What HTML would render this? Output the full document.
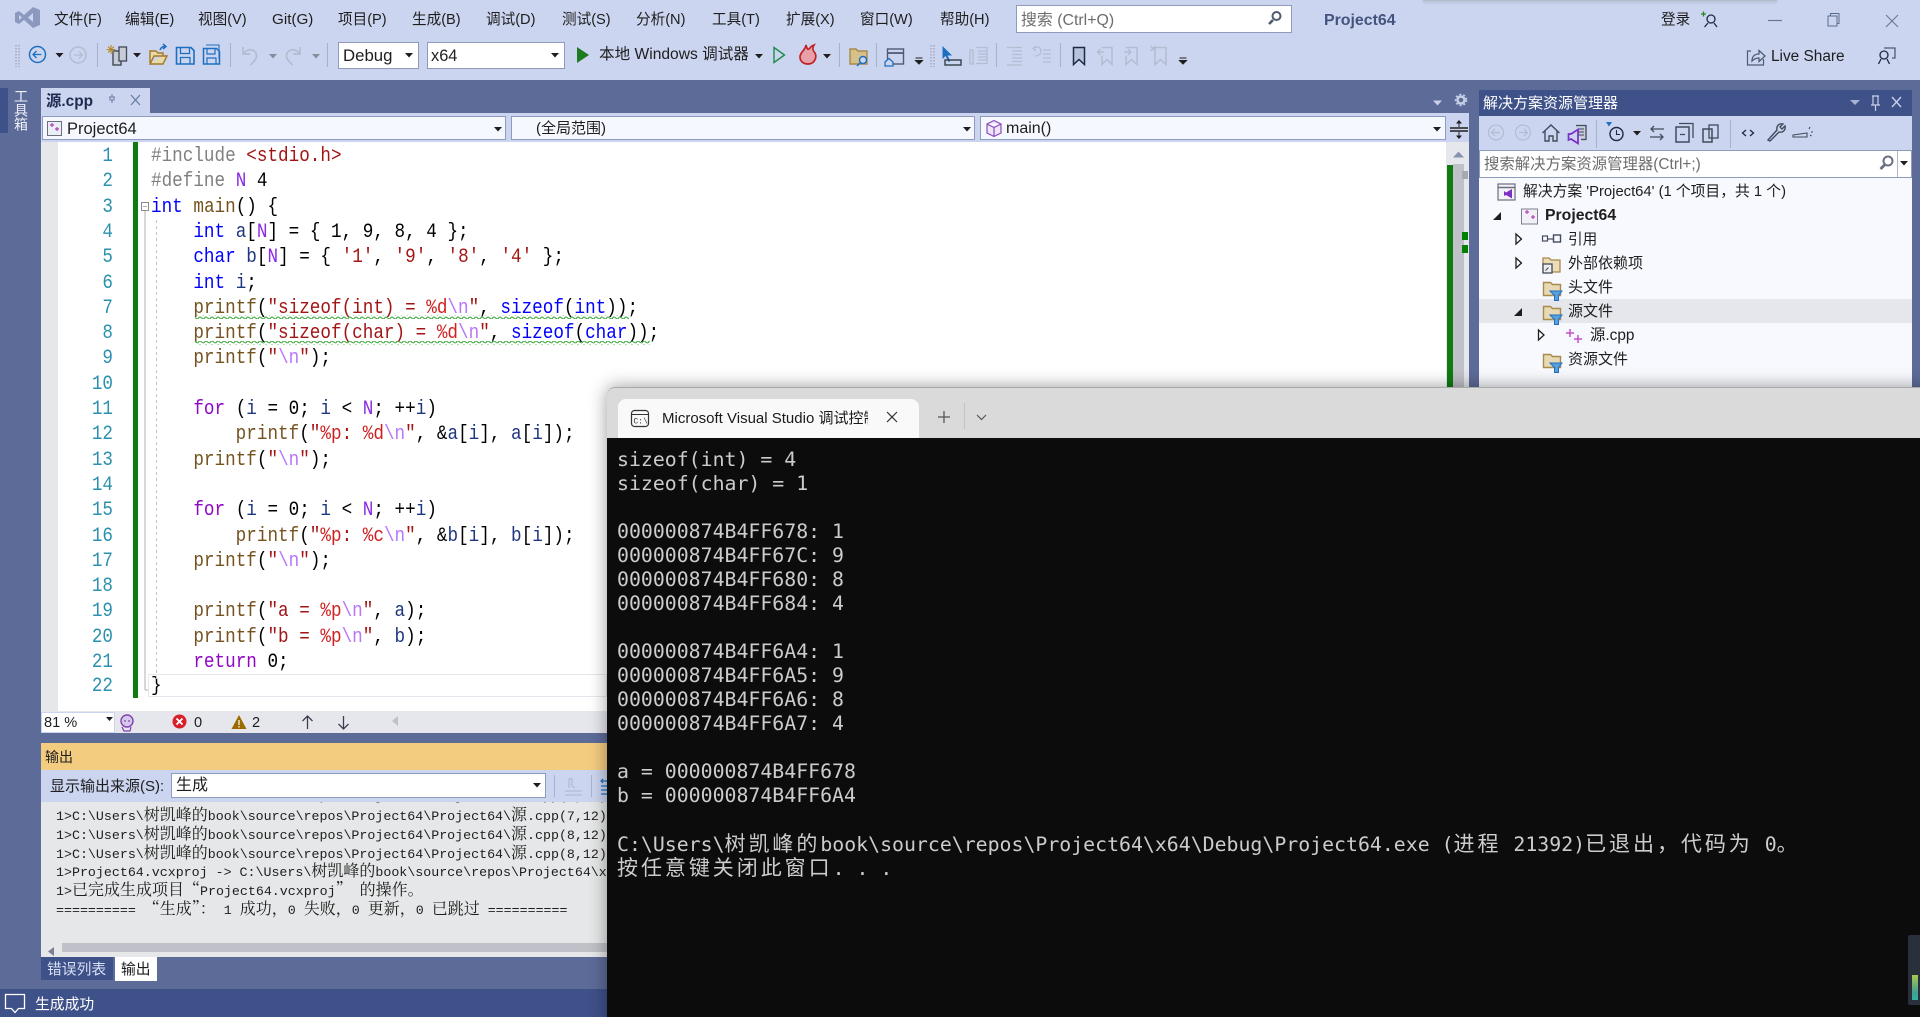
<!DOCTYPE html>
<html lang="zh-CN"><head><meta charset="utf-8"><title>Project64</title>
<style>
html,body{margin:0;padding:0;width:1920px;height:1017px;overflow:hidden;background:#5d6b99}
body{position:relative;font-family:"Liberation Sans","Noto Sans CJK SC",sans-serif;font-size:14.6px;color:#1e1e1e}
.b{position:absolute}
.t{position:absolute;white-space:nowrap;line-height:20px}
svg{position:absolute;left:0;top:0;overflow:visible}
.cb{position:absolute;background:#fff;border:1px solid #8e9bbc;box-sizing:border-box}
.l{position:absolute;left:151px;white-space:pre;font:20px/24px "Liberation Mono",monospace;transform:scaleX(.882);transform-origin:0 0;color:#000}
.n{position:absolute;left:56px;width:57px;text-align:right;font:20px/24px "Liberation Mono",monospace;transform:scaleX(.88);transform-origin:100% 0;color:#2b91af}
.k{color:#00f}.c{color:#8f08c4}.f{color:#74531f}.s{color:#a31515}.m{color:#8a2be2}.v{color:#1f377f}.p{color:#808080}.e{color:#b776fb}.r{color:#d02020}
.o{position:absolute;left:15px;white-space:pre;font:13.3px/19px "Liberation Mono",monospace;color:#1e1e1e}
.o i{font:normal 16px/19px "Noto Serif CJK SC",serif}
.tr{position:absolute;white-space:nowrap;line-height:24px;font-size:14.6px}
#con{position:absolute;left:607px;top:387px;width:1320px;height:640px;background:#dadada;border-radius:8px 0 0 0;box-shadow:0 0 18px rgba(0,0,0,.4);border-top:1px solid #aaa;box-sizing:border-box}
#term{position:absolute;left:0;top:50px;right:0;bottom:0;background:#0c0c0c}
.x{position:absolute;left:10px;white-space:pre;font:19.85px/24px "DejaVu Sans Mono",monospace;color:#ccc}
.x i{font:normal 21px/24px "Noto Sans CJK SC",sans-serif;letter-spacing:2.95px}
</style></head><body>

<!-- top chrome -->
<div class="b" style="left:0;top:0;width:1920px;height:80px;background:#ccd5f0"></div>
<div class="b" style="left:1423px;top:0;width:354px;height:1px;background:#b4b9c8;box-shadow:0 1px 3px rgba(0,0,0,.3)"></div>

<div class="t" style="left:54px;top:10px">文件(F)</div>
<div class="t" style="left:125px;top:10px;font-size:14.8px">编辑(E)</div>
<div class="t" style="left:198px;top:10px">视图(V)</div>
<div class="t" style="left:272px;top:10px;font-size:15.2px">Git(G)</div>
<div class="t" style="left:338px;top:10px">项目(P)</div>
<div class="t" style="left:412px;top:10px">生成(B)</div>
<div class="t" style="left:486px;top:10px">调试(D)</div>
<div class="t" style="left:562px;top:10px">测试(S)</div>
<div class="t" style="left:636px;top:10px">分析(N)</div>
<div class="t" style="left:712px;top:10px">工具(T)</div>
<div class="t" style="left:786px;top:10px">扩展(X)</div>
<div class="t" style="left:860px;top:10px">窗口(W)</div>
<div class="t" style="left:940px;top:10px">帮助(H)</div>

<div class="cb" style="left:1016px;top:5px;width:276px;height:28px"></div>
<div class="t" style="left:1021px;top:11px;color:#6d6d6d;font-size:15.9px">搜索 (Ctrl+Q)</div>
<div class="t" style="left:1324px;top:11px;font-weight:bold;color:#44537f;font-size:15.9px">Project64</div>
<div class="t" style="left:1661px;top:10px">登录</div>

<!-- toolbar combos -->
<div class="cb" style="left:338px;top:42px;width:81px;height:27px"></div>
<div class="t" style="left:343px;top:46px;font-size:16.8px">Debug</div>
<div class="cb" style="left:427px;top:42px;width:138px;height:27px"></div>
<div class="t" style="left:431px;top:46px;font-size:16.4px">x64</div>
<div class="t" style="left:599px;top:45px;font-size:15.6px">本地 Windows 调试器</div>
<div class="t" style="left:1771px;top:47px;font-size:15.4px">Live Share</div>

<!-- document well -->
<div class="b" style="left:0;top:88px;width:8px;height:45px;background:#3f5189"></div>
<div class="t" style="left:13px;top:89px;writing-mode:vertical-rl;font-size:14px;color:#eef0fa;line-height:16px">工具箱</div>

<div class="b" style="left:41px;top:88px;width:109px;height:26px;background:#ccd5f0"></div>
<div class="t" style="left:46px;top:92px;font-weight:bold;color:#1e2a50;font-size:15.4px">源.cpp</div>

<div class="b" style="left:41px;top:113px;width:1428px;height:30px;background:#ccd5f0"></div>
<div class="cb" style="left:42px;top:116px;width:464px;height:24px;background:#f6f8ff"></div>
<div class="cb" style="left:511px;top:116px;width:464px;height:24px;background:#f6f8ff"></div>
<div class="cb" style="left:980px;top:116px;width:466px;height:24px;background:#f6f8ff"></div>
<div class="t" style="left:67px;top:119px;font-size:16.5px">Project64</div>
<div class="t" style="left:536px;top:119px;font-size:15px">(全局范围)</div>
<div class="t" style="left:1006px;top:119px;font-size:16px">main()</div>

<!-- editor -->
<div class="b" style="left:41px;top:142px;width:1428px;height:569px;background:#fff"></div>
<div class="b" style="left:41px;top:142px;width:17px;height:569px;background:#e6e7e8"></div>
<div class="b" style="left:133px;top:142px;width:5px;height:556px;background:#107c10"></div>
<div class="b" style="left:148px;top:674px;width:459px;height:23px;border:1px solid #e6e7ee;box-sizing:border-box"></div>
<div class="b" style="left:1446px;top:142px;width:23px;height:569px;background:#e6e7ed"></div>
<div class="b" style="left:1453px;top:164px;width:11px;height:224px;background:#c0c1c8"></div>
<div class="b" style="left:1447px;top:165px;width:6px;height:223px;background:#107c10"></div>
<div class="b" style="left:1462px;top:171px;width:6px;height:8px;background:#a8a9b0"></div>
<div class="b" style="left:1462px;top:232px;width:6px;height:8px;background:#008000"></div>
<div class="b" style="left:1462px;top:245px;width:6px;height:8px;background:#008000"></div>

<div class="n" style="top:145px">1</div>
<div class="n" style="top:170px">2</div>
<div class="n" style="top:196px">3</div>
<div class="n" style="top:221px">4</div>
<div class="n" style="top:246px">5</div>
<div class="n" style="top:272px">6</div>
<div class="n" style="top:297px">7</div>
<div class="n" style="top:322px">8</div>
<div class="n" style="top:347px">9</div>
<div class="n" style="top:373px">10</div>
<div class="n" style="top:398px">11</div>
<div class="n" style="top:423px">12</div>
<div class="n" style="top:449px">13</div>
<div class="n" style="top:474px">14</div>
<div class="n" style="top:499px">15</div>
<div class="n" style="top:525px">16</div>
<div class="n" style="top:550px">17</div>
<div class="n" style="top:575px">18</div>
<div class="n" style="top:600px">19</div>
<div class="n" style="top:626px">20</div>
<div class="n" style="top:651px">21</div>
<div class="n" style="top:675px">22</div>

<div class="l" style="top:145px"><span class="p">#include</span> <span class="s">&lt;stdio.h&gt;</span></div>
<div class="l" style="top:170px"><span class="p">#define</span> <span class="m">N</span> 4</div>
<div class="l" style="top:196px"><span class="k">int</span> <span class="f">main</span>() {</div>
<div class="l" style="top:221px">    <span class="k">int</span> <span class="v">a</span>[<span class="m">N</span>] = { 1, 9, 8, 4 };</div>
<div class="l" style="top:246px">    <span class="k">char</span> <span class="v">b</span>[<span class="m">N</span>] = { <span class="s">'1'</span>, <span class="s">'9'</span>, <span class="s">'8'</span>, <span class="s">'4'</span> };</div>
<div class="l" style="top:272px">    <span class="k">int</span> <span class="v">i</span>;</div>
<div class="l" style="top:297px">    <span class="f">printf</span>(<span class="s">"sizeof(int) = </span><span class="r">%d</span><span class="e">\n</span><span class="s">"</span>, <span class="k">sizeof</span>(<span class="k">int</span>));</div>
<div class="l" style="top:322px">    <span class="f">printf</span>(<span class="s">"sizeof(char) = </span><span class="r">%d</span><span class="e">\n</span><span class="s">"</span>, <span class="k">sizeof</span>(<span class="k">char</span>));</div>
<div class="l" style="top:347px">    <span class="f">printf</span>(<span class="s">"</span><span class="e">\n</span><span class="s">"</span>);</div>
<div class="l" style="top:398px">    <span class="c">for</span> (<span class="v">i</span> = 0; <span class="v">i</span> &lt; <span class="m">N</span>; ++<span class="v">i</span>)</div>
<div class="l" style="top:423px">        <span class="f">printf</span>(<span class="s">"</span><span class="r">%p</span><span class="s">: </span><span class="r">%d</span><span class="e">\n</span><span class="s">"</span>, &amp;<span class="v">a</span>[<span class="v">i</span>], <span class="v">a</span>[<span class="v">i</span>]);</div>
<div class="l" style="top:449px">    <span class="f">printf</span>(<span class="s">"</span><span class="e">\n</span><span class="s">"</span>);</div>
<div class="l" style="top:499px">    <span class="c">for</span> (<span class="v">i</span> = 0; <span class="v">i</span> &lt; <span class="m">N</span>; ++<span class="v">i</span>)</div>
<div class="l" style="top:525px">        <span class="f">printf</span>(<span class="s">"</span><span class="r">%p</span><span class="s">: </span><span class="r">%c</span><span class="e">\n</span><span class="s">"</span>, &amp;<span class="v">b</span>[<span class="v">i</span>], <span class="v">b</span>[<span class="v">i</span>]);</div>
<div class="l" style="top:550px">    <span class="f">printf</span>(<span class="s">"</span><span class="e">\n</span><span class="s">"</span>);</div>
<div class="l" style="top:600px">    <span class="f">printf</span>(<span class="s">"a = </span><span class="r">%p</span><span class="e">\n</span><span class="s">"</span>, <span class="v">a</span>);</div>
<div class="l" style="top:626px">    <span class="f">printf</span>(<span class="s">"b = </span><span class="r">%p</span><span class="e">\n</span><span class="s">"</span>, <span class="v">b</span>);</div>
<div class="l" style="top:651px">    <span class="c">return</span> 0;</div>
<div class="l" style="top:675px">}</div>

<!-- status row under editor -->
<div class="b" style="left:41px;top:711px;width:1428px;height:22px;background:#e6e7ed"></div>
<div class="cb" style="left:41px;top:712px;width:74px;height:21px;border-color:#ccd5f0"></div>
<div class="t" style="left:44px;top:713px">81 %</div>
<div class="t" style="left:194px;top:713px">0</div>
<div class="t" style="left:252px;top:713px">2</div>

<!-- output panel -->
<div class="b" style="left:41px;top:743px;width:600px;height:27px;background:#f4cc80"></div>
<div class="t" style="left:45px;top:747px;font-size:14px">输出</div>
<div class="b" style="left:41px;top:802px;width:600px;height:155px;background:#e6e7e8;overflow:hidden">
 <div class="o" style="top:-18px">1&gt;C:\Users\<i>树凯峰的</i>book\source\repos\Project64\Project64\<i>源</i>.cpp(7,12)</div>
 <div class="o" style="top:2px">1&gt;C:\Users\<i>树凯峰的</i>book\source\repos\Project64\Project64\<i>源</i>.cpp(7,12)</div>
 <div class="o" style="top:21px">1&gt;C:\Users\<i>树凯峰的</i>book\source\repos\Project64\Project64\<i>源</i>.cpp(8,12)</div>
 <div class="o" style="top:40px">1&gt;C:\Users\<i>树凯峰的</i>book\source\repos\Project64\Project64\<i>源</i>.cpp(8,12)</div>
 <div class="o" style="top:58px">1&gt;Project64.vcxproj -&gt; C:\Users\<i>树凯峰的</i>book\source\repos\Project64\x64\Debug\Project64.exe</div>
 <div class="o" style="top:77px">1&gt;<i>已完成生成项目“</i>Project64.vcxproj<i>”</i> <i>的操作。</i></div>
 <div class="o" style="top:96px">========== <i>“生成”：</i> 1 <i>成功，</i>0 <i>失败，</i>0 <i>更新，</i>0 <i>已跳过</i> ==========</div>
 <div class="b" style="left:0;top:141px;width:600px;height:10px;background:#e6e7e8"></div>
 <div class="b" style="left:21px;top:141px;width:580px;height:9px;background:#c0c1c8"></div>
</div>
<div class="b" style="left:41px;top:770px;width:600px;height:32px;background:#ccd5f0"></div>
<div class="t" style="left:50px;top:777px;font-size:15px">显示输出来源(S):</div>
<div class="cb" style="left:171px;top:773px;width:375px;height:25px"></div>
<div class="t" style="left:176px;top:776px;font-size:16px">生成</div>

<div class="b" style="left:41px;top:957px;width:72px;height:23px;background:#3f5189"></div>
<div class="t" style="left:47px;top:960px;color:#d8def4;font-size:14.8px">错误列表</div>
<div class="b" style="left:115px;top:957px;width:42px;height:24px;background:#fff"></div>
<div class="t" style="left:121px;top:960px;font-size:14.8px">输出</div>

<div class="b" style="left:0;top:989px;width:1920px;height:28px;background:#3f5189"></div>
<div class="t" style="left:35px;top:995px;color:#fff;font-size:14.8px">生成成功</div>

<!-- solution explorer -->
<div class="b" style="left:1479px;top:90px;width:433px;height:26px;background:#3f5189"></div>
<div class="t" style="left:1483px;top:94px;color:#fff;font-size:15px">解决方案资源管理器</div>
<div class="b" style="left:1479px;top:116px;width:433px;height:34px;background:#ccd5f0"></div>
<div class="b" style="left:1479px;top:150px;width:433px;height:240px;background:#f8f9fe"></div>
<div class="cb" style="left:1479px;top:150px;width:433px;height:28px;border-color:#8e9bbc"></div>
<div class="b" style="left:1897px;top:151px;width:1px;height:26px;background:#b0b8cf"></div>
<div class="t" style="left:1484px;top:155px;color:#6d6d6d;font-size:15.4px">搜索解决方案资源管理器(Ctrl+;)</div>
<div class="b" style="left:1479px;top:299px;width:433px;height:24px;background:#e6e7ed"></div>
<div class="tr" style="left:1523px;top:180px;font-size:14.8px">解决方案 'Project64' (1 个项目，共 1 个)</div>
<div class="tr" style="left:1545px;top:204px;font-weight:bold;font-size:15.8px">Project64</div>
<div class="tr" style="left:1568px;top:228px">引用</div>
<div class="tr" style="left:1568px;top:252px;font-size:15px">外部依赖项</div>
<div class="tr" style="left:1568px;top:276px;font-size:15px">头文件</div>
<div class="tr" style="left:1568px;top:300px;font-size:15px">源文件</div>
<div class="tr" style="left:1590px;top:324px;font-size:15.4px">源.cpp</div>
<div class="tr" style="left:1568px;top:348px;font-size:15px">资源文件</div>

<!-- all icons -->
<svg width="1920" height="1017" viewBox="0 0 1920 1017" fill="none">
<defs>
<pattern id="w" width="6" height="4" patternUnits="userSpaceOnUse"><path d="M0 3 Q1.5 0 3 1.5 T6 3" stroke="#3da83d" stroke-width="1.1" fill="none"/></pattern>
<g id="fld"><path d="M0.5 1.5h7l2 2h8v11h-17z" fill="#e7d9b4" stroke="#a88a4a" stroke-width="1.4"/><path d="M7 10h12l-3.500 4.500v5h-4v-5z" fill="#5aa0e0" stroke="#1e6fbf" stroke-width="1"/></g>
<g id="tri"><path d="M0 0h8l-4 4.500z"/></g>
</defs>
<!-- squiggles -->
<rect x="195" y="315" width="434" height="4" fill="url(#w)"/>
<rect x="195" y="341" width="455" height="4" fill="url(#w)"/>
<!-- fold -->
<rect x="141.500" y="202.500" width="7" height="8" fill="#fff" stroke="#8a8a8a"/>
<path d="M143 206.500h4M145 211V690M145 690h3" stroke="#b0b0b0"/>
<path d="M156.500 220V680" stroke="#c4c4c4" stroke-dasharray="3 3"/>

<!-- VS logo -->
<path d="M33 7L40 10V25L33 28L24 20L19 24L15 22V13L19 11L24 15ZM33 13L28 17.500L33 22ZM19 15V20L22 17.500Z" fill="#8c99bf" fill-rule="evenodd"/>
<!-- search -->
<circle cx="1276.500" cy="16" r="4" stroke="#505a70" stroke-width="2"/><path d="M1273 20l-4 4" stroke="#505a70" stroke-width="2.600"/>
<!-- account -->
<path d="M1701 14h5M1703.500 11.500v5" stroke="#1e8a1e" stroke-width="1.300"/>
<circle cx="1711" cy="19" r="4" stroke="#1e2a40" stroke-width="1.300"/><path d="M1708 23l-3.500 4M1714 23l3 4" stroke="#1e2a40" stroke-width="1.300"/>
<!-- window buttons -->
<path d="M1768 20.500h14" stroke="#6b7690" stroke-width="1.200"/>
<rect x="1828" y="16" width="9" height="10" stroke="#5a6a8c"/><path d="M1830.500 16v-2.500h8.500v10h-2" stroke="#5a6a8c"/>
<path d="M1886 15l12 12M1898 15l-12 12" stroke="#6b7690" stroke-width="1.100"/>

<!-- toolbar left -->
<path d="M16 45v22M19 45v22" stroke="#8a93ad" stroke-dasharray="1.500 1.500"/>
<circle cx="37.500" cy="54.500" r="8" stroke="#1e6fbf" stroke-width="1.500"/><path d="M41.500 54.500h-8M36.500 51l-3.500 3.500 3.500 3.500" stroke="#1e6fbf" stroke-width="1.300"/>
<use href="#tri" x="55.500" y="53" fill="#1e1e1e"/>
<circle cx="78" cy="55" r="8" stroke="#b4bccf" stroke-width="1.500"/><path d="M74 55h8M79 51.500l3.500 3.500-3.500 3.500" stroke="#b4bccf" stroke-width="1.300"/>
<path d="M97.500 43v24M230.500 43v24M327.500 43v24M839.500 43v24M876.500 43v24M996.500 43v24M1060.500 43v24" stroke="#a8b2cf" stroke-width="1.100"/>
<rect x="113" y="51" width="8" height="14" fill="#c6cbd8" stroke="#404854" stroke-width="1.400"/><rect x="119" y="47" width="7.500" height="14" fill="#c6cbd8" stroke="#404854" stroke-width="1.300"/>
<path d="M111 45v9M106.500 49.500h9M108 46.500l6 6M114 46.500l-6 6" stroke="#b08a2a" stroke-width="1.100"/>
<use href="#tri" x="133" y="53" fill="#1e1e1e"/>
<path d="M150 63V51h6l2 2h5v3H154l-4 8h13l4-8h-5" fill="#e7d9a8" stroke="#a3782a" stroke-width="1.400"/><path d="M160 50c1-3 3-3.500 5-3.500M163 44l3 2.500-3 2.500" stroke="#1e6fbf" stroke-width="1.500"/>
<path d="M176.500 47.500h14.500l3 3v13.500h-17.500z" stroke="#1e6fbf" stroke-width="1.600"/><path d="M180.500 48v5.500h9V48M180.500 64v-6.500h9.500V64" stroke="#1e6fbf" stroke-width="1.300"/>
<path d="M206 45h13v14" stroke="#1e6fbf" stroke-width="1.100"/><path d="M203.500 48.500h13l3 3v12.500h-16z" stroke="#1e6fbf" stroke-width="1.500"/><path d="M207 49v5h8v-5M207 64v-6h9v6" stroke="#1e6fbf" stroke-width="1.200"/>
<path d="M243 47v7h7M243.500 53.500c4-6 13-4.500 13 2.500 0 3-2 5-6 9" stroke="#b4bccf" stroke-width="1.700"/>
<use href="#tri" x="269" y="54" fill="#888c98"/>
<path d="M300 47v7h-7M299.500 53.500c-4-6-13-4.500-13 2.500 0 3 2 5 6 9" stroke="#b4bccf" stroke-width="1.700"/>
<use href="#tri" x="312" y="54" fill="#888c98"/>
<use href="#tri" x="405" y="53" fill="#1e1e1e"/>
<use href="#tri" x="551" y="53" fill="#1e1e1e"/>
<!-- run -->
<path d="M577 47l12 8-12 8z" fill="#1e7b1e"/>
<use href="#tri" x="755" y="54" fill="#1e1e1e"/>
<path d="M774 47.500l10.500 7.500-10.500 7.500z" stroke="#1e8a4a" stroke-width="1.400" fill="none"/>
<path d="M800 57c0-5 5-6 6-12 1 3 1 5 3 4 1-1 2-3 5-4-2 3-1 6 1 8 2 4 0 11-7 11-5 0-8-3-8-7z" fill="#e8a0a8" stroke="#c0202a" stroke-width="1.700"/>
<use href="#tri" x="823" y="54" fill="#1e1e1e"/>
<path d="M850 49h6l2 2h9v13h-17z" fill="#d6c08a" stroke="#a88a4a" stroke-width="1.400"/><circle cx="863" cy="60" r="3.500" fill="#ccd5f0" stroke="#1e6fbf" stroke-width="1.400"/><path d="M860.500 62.500l-3.500 3.500" stroke="#1e6fbf" stroke-width="1.500"/>
<!-- layout icons -->
<rect x="887.500" y="49" width="16" height="15" stroke="#505a70" stroke-width="1.400"/><path d="M887.500 53h16" stroke="#505a70" stroke-width="1.800"/><path d="M885 62l4-3.500 4 3.500v4h-8z" fill="#ccd5f0" stroke="#1e6fbf" stroke-width="1.300"/>
<path d="M915.500 58h7M915.500 60.500h7l-3.500 3.500z" fill="#1e1e1e" stroke="#1e1e1e"/>
<path d="M931 45v22M934 45v22" stroke="#8a93ad" stroke-dasharray="1.500 1.500"/>
<path d="M942.500 46v13l3-3 3 6 2-1-3-5.500h4.500z" fill="#1e6fbf"/><rect x="945" y="60" width="16" height="5" stroke="#404854" stroke-width="1.500"/>
<path d="M970 50h3v14h-3zM976 47.500h11v16h-11M978 51h8M978 54h8M978 57h8M978 60h8" stroke="#b4bccf" stroke-width="1.300"/>
<path d="M1007 47.500h15M1012 51h10M1012 54.500h10M1012 58h10M1012 61.500h10M1007 65h15" stroke="#b4bccf" stroke-width="1.200"/>
<path d="M1034 48c3-2 7-1 7 3s-4 5-6 5M1036 46l-3 2.500 3 2.500M1043 50h8M1043 54h8M1043 58h8M1043 62h8" stroke="#b4bccf" stroke-width="1.200"/>
<path d="M1073.500 47.500h11v17l-5.500-5-5.500 5z" fill="#b7c3dd" stroke="#1e2a40" stroke-width="1.500"/>
<path d="M1102 47.500h10v17l-5-5-5 5v-9M1104 52h-6M1100.500 49l-3 3 3 3" stroke="#b4bccf" stroke-width="1.500"/>
<path d="M1126 47.500h11v17l-5.500-5-5.500 5v-9M1124 52h6M1128 49l3 3-3 3" stroke="#b4bccf" stroke-width="1.500"/>
<path d="M1155 47.500h11v17l-5.500-5-5.500 5zM1150.500 46l5 5M1155.500 46l-5 5" stroke="#b4bccf" stroke-width="1.500"/>
<path d="M1179.500 58h7M1179.500 60.500h7l-3.500 3.500z" fill="#1e1e1e" stroke="#1e1e1e"/>
<!-- live share -->
<path d="M1751 51h-3.500v14h16v-6" stroke="#505a70" stroke-width="1.200"/><path d="M1752 61c0-5 3-7 7-7v-3.500l6 5.500-6 5.500V58c-3 0-5 1-7 3z" stroke="#505a70" stroke-width="1.300"/>
<path d="M1884 48h11v10h-3" stroke="#505a70" stroke-width="1.300"/><circle cx="1884" cy="55" r="4" fill="#ccd5f0" stroke="#1e2a40" stroke-width="1.300"/><path d="M1881 59l-2.500 5M1887 59l2.500 5" stroke="#1e2a40" stroke-width="1.300"/>
<!-- tab -->
<path d="M109 97h6M112 94v3M110 97v3h4v-3M112 100v3" stroke="#6a7aa0"/>
<path d="M131 95l9 10M140 95l-9 10" stroke="#6a7aa0" stroke-width="1.300"/>
<!-- nav bar icons -->
<rect x="47.500" y="121.500" width="14" height="14" fill="#eceef5" stroke="#6a6f80"/><path d="M50 125h4M52 123v4M55 129h4M57 127v4" stroke="#b040b8" stroke-width="1.200"/>
<use href="#tri" x="494" y="127" fill="#1e1e1e"/>
<use href="#tri" x="963" y="127" fill="#1e1e1e"/>
<use href="#tri" x="1433" y="127" fill="#1e1e1e"/>
<path d="M994 120.500l7 3.500v9l-7 3.500-7-3.500v-9zM987 124l7 3.500 7-3.500M994 127.500v9" stroke="#8a4bbf" stroke-width="1.200" fill="#eee6f6"/>
<path d="M1450 128h18M1450 131h18" stroke="#1e1e1e" stroke-width="1.400"/><path d="M1459 120l-3 3.500h6zM1459 139l-3-3.500h6z" fill="#1e1e1e"/><path d="M1459 122v5M1459 132v5" stroke="#1e1e1e"/>
<path d="M1453 157.500l5.500-6 5.500 6z" fill="#8a93ad"/>
<!-- gear -->
<circle cx="1461" cy="100" r="3.500" stroke="#c8d0e8" stroke-width="2.400"/><circle cx="1461" cy="100" r="5.500" stroke="#c8d0e8" stroke-width="1.500" stroke-dasharray="2 2"/>
<path d="M1433 100.500h9l-4.500 5z" fill="#c8d0e8"/>
<!-- status row -->
<path d="M106 717h7l-3.500 4z" fill="#1e1e1e"/>
<circle cx="127" cy="721" r="6" fill="#d8c8ec" stroke="#8040b0" stroke-width="1.400"/><path d="M122 727l2 4h6l1-4M125 720v2M129 720v2" stroke="#8040b0" stroke-width="1.200"/>
<circle cx="179.500" cy="721.500" r="7" fill="#d8202a"/><path d="M176.500 718.500l6 6M182.500 718.500l-6 6" stroke="#fff" stroke-width="1.800"/>
<path d="M239 715l7.500 14h-15z" fill="#9c6b00"/><path d="M239 720v5M239 726v1.500" stroke="#fff" stroke-width="1.200"/>
<path d="M307.500 729v-13M302.500 721l5-5 5 5M343.500 716v13M338.500 724l5 5 5-5" stroke="#3a3f4d" stroke-width="1.300"/>
<path d="M398 716v10l-6-5z" fill="#c0c1c8"/>
<!-- output toolbar -->
<path d="M554.500 775v22M591.500 775v22" stroke="#a8b2cf"/>
<use href="#tri" x="533" y="783" fill="#1e1e1e"/>
<path d="M565 795h17M565 791h17M569 788v-8c0-2 3-2 3 0v6M572 786l3 2" stroke="#b4bccf" stroke-width="1.300"/>
<path d="M607 781h-6M603 779l-2 2 2 2M601 786h6M601 790h6M601 794h6" stroke="#1e6fbf" stroke-width="1.200"/>
<path d="M54 947v9l-6-4.500z" fill="#7a8094"/>
<!-- status icon -->
<path d="M5.500 994.500h19v14h-6l-3.500 4-3.500-4h-6z" stroke="#fff" stroke-width="1.300" fill="none"/>

<!-- solution explorer title -->
<path d="M1850 100h10l-5 5z" fill="#a8b2d4"/>
<path d="M1872 96h7M1873 96v9h5v-9M1871 105h9M1875.500 105v6" stroke="#c8d0e8" stroke-width="1.200"/>
<path d="M1892 97l9 10M1901 97l-9 10" stroke="#c8d0e8" stroke-width="1.400"/>
<!-- solution toolbar -->
<circle cx="1496" cy="132.500" r="7.500" stroke="#b4bccf" stroke-width="1.200"/><path d="M1500 132.500h-8M1495 129l-3.500 3.500 3.500 3.500" stroke="#b4bccf" stroke-width="1.200"/>
<circle cx="1523" cy="132.500" r="7.500" stroke="#b4bccf" stroke-width="1.200"/><path d="M1519 132.500h8M1524 129l3.500 3.500-3.500 3.500" stroke="#b4bccf" stroke-width="1.200"/>
<path d="M1542.500 133l8.500-8 8.500 8M1545 131v10h4v-5h4v5h4v-10" stroke="#424a5c" stroke-width="1.400"/>
<path d="M1576 125.500h10v14h-5" fill="#c6cbd8" stroke="#424a5c" stroke-width="1.300"/><path d="M1578 129h6M1578 132h6M1578 135h6" stroke="#424a5c"/>
<path d="M1568.500 134v6l2.500-1 7 4.500v-14l-7 4.500z" stroke="#7a2bc8" stroke-width="1.700" fill="#ccd5f0"/>
<path d="M1596.500 120v28M1730.500 120v28" stroke="#a8b2cf" stroke-width="1.100"/>
<path d="M1606 122h6l-3 4.500z" fill="#1e6fbf"/>
<circle cx="1616.500" cy="134" r="6.500" stroke="#1e2a40" stroke-width="1.400"/><path d="M1616.500 130v4.500h3.500" stroke="#1e2a40" stroke-width="1.100"/>
<use href="#tri" x="1633" y="131" fill="#1e1e1e"/>
<path d="M1664 129h-13M1654 126l-3 3 3 3M1650 137h13M1660 134l3 3-3 3" stroke="#424a5c" stroke-width="1.300"/>
<rect x="1676" y="127" width="13" height="15" stroke="#424a5c" stroke-width="1.500"/><path d="M1679 123.500h14v14.500M1680 134.500h5" stroke="#424a5c" stroke-width="1.300"/>
<rect x="1703" y="129" width="9" height="13" stroke="#424a5c" stroke-width="1.500"/><rect x="1709" y="125" width="9" height="13" stroke="#424a5c" stroke-width="1.300"/>
<path d="M1746 130l-3.500 3 3.500 3M1750 130l3.500 3-3.500 3" stroke="#1e2a40" stroke-width="1.300"/>
<path d="M1768 140l9-10c-1-4 2-7 6-6l-3 3 2 2 3-3c1 4-2 7-6 6l-9 9z" stroke="#424a5c" stroke-width="1.400"/>
<path d="M1793 135l14-2v4h-14zM1809 129l1-2M1811 132h2M1810 135l1.500 1" stroke="#424a5c" stroke-width="1.100"/>
<!-- search explorer -->
<circle cx="1888" cy="161" r="4.500" stroke="#6a7080" stroke-width="2"/><path d="M1884.500 165l-4 4" stroke="#6a7080" stroke-width="2.800"/>
<use href="#tri" x="1900" y="161" fill="#1e1e1e"/>
<!-- tree -->
<rect x="1498" y="184" width="17" height="16" fill="#f4f4f8" stroke="#6a7080" stroke-width="1.200"/><path d="M1498 187.500h17" stroke="#6a7080" stroke-width="1.600"/><path d="M1504 191v5l2-1 6 3.500V189l-6 3.500z" fill="#8030c0"/>
<path d="M1493 220l8-8v8z" fill="#1e1e1e"/>
<rect x="1521.500" y="209" width="16" height="15" fill="#f0f0f6" stroke="#7a8090"/><path d="M1525 212h4M1527 210v4M1531 217h4M1533 215v4" stroke="#c040c0" stroke-width="1.200"/>
<path d="M1516 234v10l5.500-5z M1516 258v10l5.500-5z" stroke="#1e1e1e" stroke-width="1.300" fill="#fff"/>
<rect x="1542.500" y="236" width="5" height="5" stroke="#424a5c" stroke-width="1.200"/><path d="M1548 239h5" stroke="#424a5c" stroke-width="1.200"/><rect x="1553.500" y="235" width="7" height="7" stroke="#424a5c" stroke-width="1.400"/>
<path d="M1543 258h6l2 2h9v12h-17z" fill="#ecdcb8" stroke="#a88a4a" stroke-width="1.300"/><rect x="1543" y="264" width="9" height="9" fill="#eee" stroke="#424a5c" stroke-width="1.300"/><path d="M1545.500 270.500l3-3" stroke="#424a5c"/>
<use href="#fld" x="1543" y="281"/>
<use href="#fld" x="1543" y="305"/>
<use href="#fld" x="1543" y="353"/>
<path d="M1514 316l8-8v8z" fill="#1e1e1e"/>
<path d="M1538.500 330v10l5.500-5z" stroke="#1e1e1e" stroke-width="1.300" fill="#fff"/>
<path d="M1566 333h8M1570 329v8M1574 339h8M1578 335v8" stroke="#c050c8" stroke-width="1.500"/>
</svg>

<!-- console -->
<div id="con">
 <div class="b" style="left:11px;top:11px;width:301px;height:39px;background:#f9f9f9;border-radius:8px 8px 0 0"></div>
 <div class="t" style="left:55px;top:21px;width:206px;overflow:hidden;font-size:15px;color:#1a1a1a">Microsoft Visual Studio 调试控制台</div>
 <svg width="400" height="50" fill="none">
  <rect x="24.500" y="22.500" width="17" height="16" rx="3" stroke="#333" stroke-width="1.200"/>
  <path d="M24.500 26.500h17" stroke="#333"/>
  <text x="26.500" y="35.500" font-family="Liberation Mono, monospace" font-size="8" fill="#333">C:\</text>
  <path d="M280 24l10 10M290 24l-10 10" stroke="#333" stroke-width="1.200"/>
  <path d="M331 29h12M337 23v12" stroke="#555" stroke-width="1.300"/>
  <path d="M357.500 15v26" stroke="#c4c4c4"/>
  <path d="M370 27l4.500 4.500 4.500-4.500" stroke="#555" stroke-width="1.200"/>
 </svg>
 <div id="term">
  <div class="x" style="top:10px">sizeof(int) = 4</div>
  <div class="x" style="top:34px">sizeof(char) = 1</div>
  <div class="x" style="top:82px">000000874B4FF678: 1</div>
  <div class="x" style="top:106px">000000874B4FF67C: 9</div>
  <div class="x" style="top:130px">000000874B4FF680: 8</div>
  <div class="x" style="top:154px">000000874B4FF684: 4</div>
  <div class="x" style="top:202px">000000874B4FF6A4: 1</div>
  <div class="x" style="top:226px">000000874B4FF6A5: 9</div>
  <div class="x" style="top:250px">000000874B4FF6A6: 8</div>
  <div class="x" style="top:274px">000000874B4FF6A7: 4</div>
  <div class="x" style="top:322px">a = 000000874B4FF678</div>
  <div class="x" style="top:346px">b = 000000874B4FF6A4</div>
  <div class="x" style="top:393px">C:\Users\<i>树凯峰的</i>book\source\repos\Project64\x64\Debug\Project64.exe (<i>进程</i> 21392)<i>已退出，代码为</i> 0<i>。</i></div>
  <div class="x" style="top:417px"><i>按任意键关闭此窗口</i>. . .</div>
  <div class="b" style="left:1301px;top:497px;width:12px;height:70px;background:#2a2f3c;border-radius:2px 0 0 2px"></div>
  <div class="b" style="left:1305px;top:537px;width:6px;height:25px;background:linear-gradient(#a8c850,#40a090 70%,#30b0a0)"></div>
 </div>
</div>
</body></html>
